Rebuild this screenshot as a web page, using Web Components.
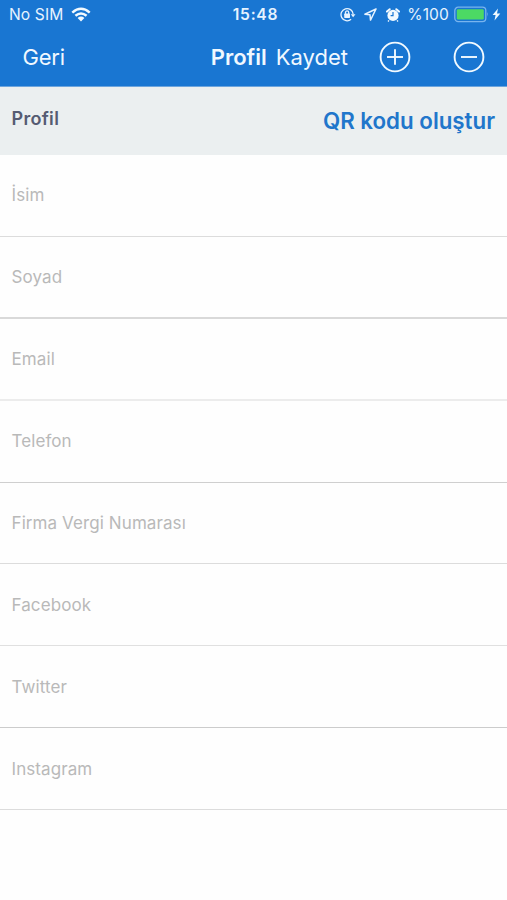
<!DOCTYPE html>
<html lang="tr">
<head>
<meta charset="utf-8">
<title>Profil</title>
<style>
html,body{margin:0;background:#fefefe}
body{font-family:Inter,"Liberation Sans",sans-serif;width:507px;height:900px;overflow:hidden}
</style>
</head>
<body>
<profile-screen></profile-screen>
<script>
const define=(name,css,html)=>customElements.define(name,class extends HTMLElement{
  constructor(){super();this.attachShadow({mode:'open'}).innerHTML=`<style>${css}</style>${html}`}
});

define('status-bar',`
:host{display:grid;grid-template-columns:1fr auto 1fr;align-items:center;height:28px;padding:0 6px 0 9px;color:#e6f3ff;font-size:15.6px;line-height:28px;white-space:nowrap}
.left,.right{display:flex;align-items:center}
.left{gap:8px}.right{justify-content:flex-end}
.sim,.time,.pct{padding-top:1px}
.sim{letter-spacing:.1px}
.time{font-weight:600;letter-spacing:.75px;position:relative;left:.5px}
svg{display:block;flex:none}
.pct{margin:0 5px 0 7px;letter-spacing:.1px}
`,`
<div class="left"><span class="sim">No SIM</span>
<svg width="20" height="15" viewBox="0 0 20 15" fill="none" stroke="#f2faff" stroke-width="2.5"><path d="M1.3 5.6Q10-2 18.7 5.6M4.4 8.8q5.6-4.7 11.2 0"/><path d="M6.6 11q3.4-2.8 6.8 0L10 14.4Z" fill="#f2faff" stroke="none"/></svg></div>
<span class="time">15:48</span>
<div class="right">
<svg width="16" height="15" viewBox="0 0 16 15" fill="none" stroke="#e6f3ff" stroke-width="1.3"><path d="M11.1 12.3A6.1 6.1 0 1 1 13.2 7.2"/><path d="M10.8 7.2h4.7l-2.4 3Z" fill="#e6f3ff" stroke="none"/><path d="M5.5 7V5.5a1.6 1.6 0 0 1 3.2 0V7"/><rect x="4.2" y="6.6" width="5.8" height="4.3" rx=".6" fill="#e6f3ff" stroke="none"/></svg>
<svg style="margin-left:8px" width="13" height="13" viewBox="0 0 13 13" fill="none" stroke="#e6f3ff" stroke-width="1.5" stroke-linejoin="round"><path d="M12 1 .9 6.2l5.1.6.5 5.3Z"/></svg>
<svg style="margin-left:9px" width="14" height="14" viewBox="0 0 14 14"><circle cx="7" cy="7.4" r="5.6" fill="#f2faff"/><path d="M1 3.6 3.7 1.2M13 3.6 10.3 1.2" stroke="#f2faff" stroke-width="2" stroke-linecap="round"/><path d="M3 12.4 2 13.5M11 12.4l1 1.1" stroke="#f2faff" stroke-width="1.4"/><path d="M7 4v3.7H4.6" fill="none" stroke="#1976d2" stroke-width="1.2"/></svg>
<span class="pct">%100</span>
<svg width="36" height="17" viewBox="0 0 36 17"><rect x=".8" y="1.2" width="31" height="14.4" rx="3.4" fill="none" stroke="#79b4ee" stroke-width="1.3"/><rect x="2.8" y="3.2" width="27" height="10.4" rx="1.4" fill="#4cd964"/><path d="M33.3 6q1.8 2.4 0 4.8Z" fill="#79b4ee"/></svg>
<svg style="margin-left:2px" width="9" height="13" viewBox="0 0 9 13"><path d="M6 .5.6 7h3L2.5 12.5 8.3 5.4H5Z" fill="#f2faff"/></svg>
</div>`);

define('circle-button',`:host{display:block;width:32px;height:32px}svg{display:block}:host([kind=minus]) .v{display:none}`,
`<svg width="32" height="32" viewBox="0 0 32 32" fill="none" stroke="#f2faff" stroke-width="1.9"><circle cx="16" cy="16" r="14.4"/><path d="M8 16h16"/><path class="v" d="M16 8.2v15.6"/></svg>`);

define('nav-bar',`
:host{display:flex;align-items:center;height:58px;padding:0 22px 0 22.5px;color:#f0f8ff;font-size:22px;line-height:58px;white-space:nowrap}
.back{letter-spacing:-.2px}
.title{font-weight:600;margin-left:auto;margin-right:9px}
.add{margin:0 42px 0 31px}
`,`<span class="back">Geri</span><span class="title">Profil</span><span class="save">Kaydet</span>
<circle-button class="add" kind="plus"></circle-button><circle-button kind="minus"></circle-button>`);

define('section-header',`
:host{display:flex;justify-content:space-between;height:68px;padding:0 12px 0 11.5px;background:#ebeff0;box-sizing:border-box;white-space:nowrap}
.t{color:#555b72;font-weight:600;font-size:18px;letter-spacing:.3px;line-height:64px}
.a{color:#2176cb;font-weight:600;font-size:22.3px;line-height:67px}
`,`<span class="t"><slot></slot></span><span class="a"><slot name="action"></slot></span>`);

define('form-row',`
:host{display:block;height:82px;box-sizing:border-box;padding:0 11.5px;border-bottom:1px solid var(--line,#dcdcdc);color:#b9b9b9;font-size:17px;line-height:80px;letter-spacing:.09px;white-space:nowrap}
:host(.low){line-height:82px}
`,`<slot></slot>`);

define('profile-screen',`
:host{display:block;width:507px;height:900px;background:#fefefe}
header{background:#1976d2;height:87px;box-sizing:border-box;border-bottom:1px solid #6da5dd}
`,`
<header><status-bar></status-bar><nav-bar></nav-bar></header>
<section-header>Profil<span slot="action">QR kodu oluştur</span></section-header>
<form-row>İsim</form-row>
<form-row style="border-bottom-width:2px;--line:#d9d9d9">Soyad</form-row>
<form-row style="border-bottom-width:2px;--line:#ececec">Email</form-row>
<form-row style="--line:#cfcfcf">Telefon</form-row>
<form-row style="height:81px">Firma Vergi Numarası</form-row>
<form-row class="low" style="--line:#e0e0e0">Facebook</form-row>
<form-row class="low" style="--line:#cccccc">Twitter</form-row>
<form-row class="low">Instagram</form-row>`);
</script>
</body>
</html>
